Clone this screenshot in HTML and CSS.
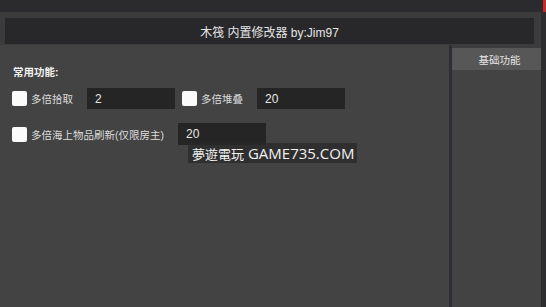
FILE: index.html
```html
<!DOCTYPE html>
<html lang="zh-CN">
<head>
    <meta charset="UTF-8">
    <title>木筏 内置修改器</title>
    <link rel="stylesheet" href="styles.css">
</head>
<body>

<div class="topbar">
    <span class="close-btn"></span>
</div>

<div class="window">
    <div class="content">
        <!-- 标题栏 -->
        <div class="title-bar">木筏 内置修改器 by:Jim97</div>

        <div class="panels">
            <!-- 左侧功能区 -->
            <div class="left-panel">
                <div class="section-title">常用功能:</div>

                <div class="option-row">
                    <div class="option">
                        <span class="check-box"></span>
                        <span class="option-label">多倍拾取</span>
                        <input class="value-input" type="text" value="2">
                    </div>
                    <div class="option">
                        <span class="check-box"></span>
                        <span class="option-label">多倍堆叠</span>
                        <input class="value-input" type="text" value="20">
                    </div>
                </div>

                <div class="option-row second">
                    <div class="option">
                        <span class="check-box"></span>
                        <span class="option-label">多倍海上物品刷新(仅限房主)</span>
                        <input class="value-input" type="text" value="20">
                    </div>
                </div>
            </div>

            <div class="divider"></div>

            <!-- 右侧标签 -->
            <div class="right-panel">
                <div class="tab">基础功能</div>
                <div class="tab-body"></div>
            </div>
        </div>
    </div>
    <div class="edge"></div>
</div>

<div class="watermark"><span class="wm-cjk">夢遊電玩</span> GAME735.COM</div>

</body>
</html>
```

FILE: styles.css
```css
body {
    margin: 0;
    width: 546px;
    height: 307px;
    overflow: hidden;
    background-color: #3b3b3c;
    font-family: 'Liberation Sans', 'Noto Sans CJK SC', sans-serif;
    display: flex;
    flex-direction: column;
    position: relative;
}

.topbar {
    height: 12px;
    background-color: #2b2b2e;
    display: flex;
    justify-content: flex-end;
    flex-shrink: 0;
}

.close-btn {
    width: 3px;
    height: 12px;
    background-color: #c42b2b;
}

.window {
    flex: 1;
    display: flex;
}

.content {
    flex: 1;
    display: flex;
    flex-direction: column;
    padding-top: 6px;
}

.title-bar {
    height: 26px;
    margin: 0 7px 0 5px;
    background-color: #28282b;
    color: #e4e4e4;
    font-size: 12px;
    display: flex;
    align-items: center;
    justify-content: center;
}

.panels {
    flex: 1;
    display: flex;
    margin-top: 1px;
}

.left-panel {
    width: 437px;
    background-color: #434343;
    padding: 19px 0 0 12px;
}

.section-title {
    color: #f0f0f0;
    font-size: 10.5px;
    font-weight: bold;
    line-height: 16px;
    margin-left: 1px;
}

.option-row {
    display: flex;
    gap: 7px;
    margin-top: 8px;
}

.option-row.second {
    margin-top: 14px;
}

.option {
    display: flex;
    align-items: center;
}

.check-box {
    width: 15px;
    height: 15px;
    background-color: #fbfbfb;
    border-radius: 2px;
}

.option-label {
    margin-left: 4px;
    color: #dcdcdc;
    font-size: 10.5px;
}

.value-input {
    width: 88px;
    height: 21px;
    margin-left: 14px;
    box-sizing: border-box;
    padding: 0 8px;
    border: none;
    outline: none;
    background-color: #252525;
    color: #e8e8e8;
    font-family: 'Liberation Sans', sans-serif;
    font-size: 12px;
}

.option-row.second .value-input {
    height: 22px;
}

.divider {
    width: 3px;
    background-color: #2f2f33;
}

.right-panel {
    flex: 1;
    display: flex;
    flex-direction: column;
    padding-top: 3px;
    background-color: #3c3c3e;
}

.tab {
    height: 22px;
    background-color: #575757;
    color: #e6e6e6;
    font-size: 10.5px;
    display: flex;
    align-items: center;
    justify-content: center;
    padding-left: 6px;
}

.tab-body {
    flex: 1;
    background-color: #434343;
}

.edge {
    width: 5px;
    background-color: #2d2d30;
}

.watermark {
    position: absolute;
    left: 188px;
    top: 143px;
    height: 20px;
    padding: 0 3px 0 4px;
    background-color: rgba(40, 40, 40, 0.75);
    color: #f2f2f2;
    font-family: 'Open Sans', 'Noto Sans CJK TC', sans-serif;
    font-size: 15px;
    line-height: 20px;
}

.wm-cjk {
    font-family: 'Noto Sans CJK TC', sans-serif;
    font-size: 13px;
}
```
